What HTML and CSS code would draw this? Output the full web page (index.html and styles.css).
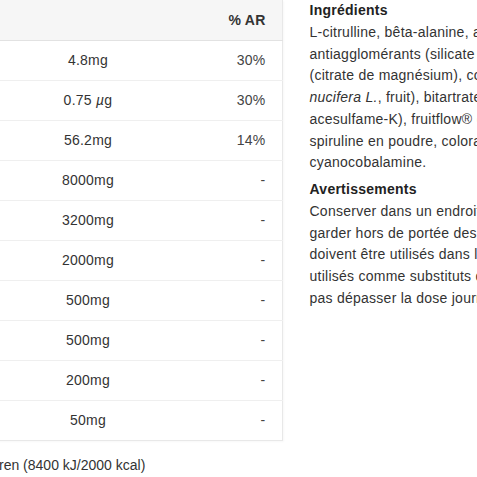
FILE: index.html
```html
<!DOCTYPE html>
<html lang="fr">
<head>
<meta charset="utf-8">
<title>Informations nutritionnelles</title>
<link rel="stylesheet" href="styles.css">
</head>
<body>
<div class="page">
  <section class="nutrition">
    <table class="facts">
      <thead>
        <tr><th class="c-name">Nutriment</th><th class="c-val"></th><th class="c-ar">% AR</th></tr>
      </thead>
      <tbody>
        <tr><td class="c-name">Vitamine B6</td><td class="c-val">4.8mg</td><td class="c-ar">30%</td></tr>
        <tr><td class="c-name">Vitamine B12</td><td class="c-val">0.75 <i>µ</i>g</td><td class="c-ar">30%</td></tr>
        <tr><td class="c-name">Magnésium</td><td class="c-val">56.2mg</td><td class="c-ar">14%</td></tr>
        <tr><td class="c-name">L-citrulline</td><td class="c-val">8000mg</td><td class="c-ar">-</td></tr>
        <tr><td class="c-name">Bêta-alanine</td><td class="c-val">3200mg</td><td class="c-ar">-</td></tr>
        <tr><td class="c-name">Bitartrate de choline</td><td class="c-val">2000mg</td><td class="c-ar">-</td></tr>
        <tr><td class="c-name">Eau de coco</td><td class="c-val">500mg</td><td class="c-ar">-</td></tr>
        <tr><td class="c-name">Spiruline</td><td class="c-val">500mg</td><td class="c-ar">-</td></tr>
        <tr><td class="c-name">Fruitflow®</td><td class="c-val">200mg</td><td class="c-ar">-</td></tr>
        <tr><td class="c-name">Caféine</td><td class="c-val">50mg</td><td class="c-ar">-</td></tr>
      </tbody>
    </table>
    <p class="note">ren (8400 kJ/2000 kcal)</p>
  </section>
  <aside class="details">
    <div class="block">
      <h3 class="block-title">Ingrédients</h3>
      <p class="block-text"><span class="ln">L-citrulline, bêta-alanine, arômes, acidifiant (acide citrique), agents</span><span class="ln">antiagglomérants (silicate de calcium, dioxyde de silicium), magnésium</span><span class="ln">(citrate de magnésium), concentré d'eau de coco en poudre (<i>Cocos</i></span><span class="ln"><i>nucifera L.</i>, fruit), bitartrate de choline, édulcorants (sucralose,</span><span class="ln">acesulfame-K), fruitflow® (concentré de tomate soluble dans l'eau),</span><span class="ln">spiruline en poudre, colorant (bêta-carotène), vitamine B12</span><span class="ln">cyanocobalamine.</span></p>
    </div>
    <div class="block">
      <h3 class="block-title">Avertissements</h3>
      <p class="block-text"><span class="ln">Conserver dans un endroit frais et sec, à l'abri de la lumière. À</span><span class="ln">garder hors de portée des jeunes enfants. Les compléments alimentaires</span><span class="ln">doivent être utilisés dans le cadre d'un mode de vie sain et ne doivent pas être</span><span class="ln">utilisés comme substituts d'un régime alimentaire varié et équilibré. Ne</span><span class="ln">pas dépasser la dose journalière recommandée.</span></p>
    </div>
  </aside>
</div>
</body>
</html>
```

FILE: styles.css
```css
html, body {
  margin: 0;
  padding: 0;
  overflow: hidden;
  background: #ffffff;
}

body {
  font-family: "Liberation Sans", Arial, Helvetica, sans-serif;
  font-size: 14px;
  letter-spacing: 0.25px;
  color: #333333;
}

.page {
  display: flex;
  align-items: flex-start;
  gap: 27px;
  margin-left: -200px;
  width: 1200px;
}

.nutrition {
  flex: 0 0 482px;
}

.facts {
  width: 482px;
  border-collapse: collapse;
  table-layout: fixed;
  border-right: 1px solid #e8e8e8;
  border-bottom: 1px solid #e8e8e8;
  box-shadow: 1px 1px 2px rgba(0, 0, 0, 0.03);
}

.facts th,
.facts td {
  height: 40px;
  padding: 0 16px;
  box-sizing: border-box;
  line-height: 20px;
}

.facts thead th {
  background: #f6f6f6;
  font-weight: bold;
  border-bottom: 1px solid #e2e2e2;
  color: #333333;
}

.facts tbody td {
  border-bottom: 1px solid #efefef;
}

.facts tbody tr:last-child td {
  border-bottom: none;
}

.c-name { width: 200px; text-align: left; }
.c-val { width: 176px; text-align: center; }
.c-ar { width: 106px; text-align: right; }

.facts td.c-ar {
  color: #444444;
}

.note {
  margin: 14px 0 0 199px;
  line-height: 20px;
  letter-spacing: 0;
  color: #333333;
}

.details {
  flex: 0 0 700px;
}

.block + .block {
  margin-top: 5px;
}

.block-title {
  margin: 0 0 2px;
  font-size: 14px;
  line-height: 20px;
  font-weight: bold;
  color: #222222;
}

.block-text {
  margin: 0;
  line-height: 21.7px;
  color: #333333;
}

.ln {
  display: block;
  white-space: nowrap;
}
```
